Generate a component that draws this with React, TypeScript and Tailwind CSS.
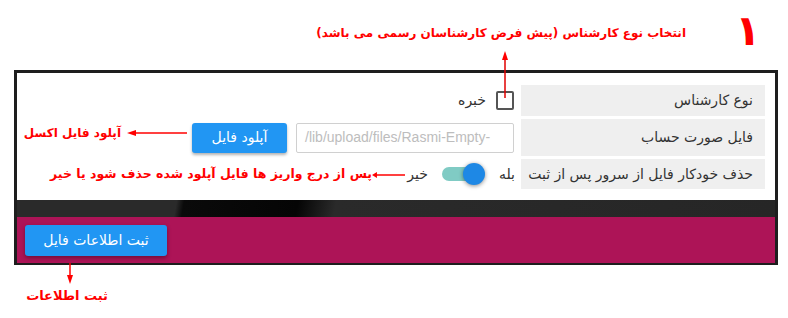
import React from 'react';

const ui = { fontFamily: '"DejaVu Sans", "Noto Sans", sans-serif' };
const note = { fontFamily: '"DejaVu Sans", sans-serif' };

function ArrowLeft({ className }: { className: string }) {
  return (
    <svg className={className} viewBox="0 0 60 8" preserveAspectRatio="none">
      <line x1="6" y1="4" x2="60" y2="4" stroke="#ff0000" strokeWidth="1.5" />
      <polygon points="0,4 9,1 9,7" fill="#ff0000" />
    </svg>
  );
}

function Label({ children, h }: { children: React.ReactNode; h: string }) {
  return (
    <div className={`w-[244px] shrink-0 bg-[#efefef] flex items-center pr-3 text-[14px] text-[#333] ${h}`}>
      {children}
    </div>
  );
}

export default function App() {
  return (
    <div className="relative w-[788px] h-[318px] bg-white overflow-hidden" style={ui}>
      <div className="pt-[70px] pl-[14px]">
        <div className="w-[764px] bg-[#222] border-t-[3px] border-x-[3px] border-b-[2px] border-[#1e1e1e]">
          <div className="h-[127px] bg-white pt-[12px] pr-[10px] flex flex-col gap-[3px] items-start" dir="rtl">
            <div className="flex items-center">
              <Label h="h-[31px]">نوع کارشناس</Label>
              <div className="mr-[7px] w-[18px] h-[19px] border-2 border-[#555] rounded-[2px]" />
              <span className="mr-[10px] text-[14px] text-[#333]">خبره</span>
            </div>
            <div className="flex items-center">
              <Label h="h-[37px]">فایل صورت حساب</Label>
              <div
                className="mr-[7px] w-[218px] h-[30px] border border-[#d0d0d0] border-b-dotted rounded-[2px] flex items-center px-2 text-[14px] text-[#bdbdbd] overflow-hidden whitespace-nowrap"
                dir="ltr"
                style={{ fontFamily: '"Liberation Sans", Arial, sans-serif' }}
              >
                /lib/upload/files/Rasmi-Empty-
              </div>
              <button className="mr-[9px] w-[95px] h-[30px] bg-[#2196f3] text-white text-[14px] rounded-[3px] shadow-[0_2px_3px_rgba(0,0,0,0.3)]">
                آپلود فایل
              </button>
            </div>
            <div className="flex items-center">
              <Label h="h-[30px]">حذف خودکار فایل از سرور پس از ثبت</Label>
              <span className="mr-[6px] text-[14px] text-[#333]">بله</span>
              <div className="relative mr-[15px] w-[42px] h-[14px] rounded-full bg-[#80cbc4]" dir="ltr">
                <div className="absolute left-[21px] top-[-4px] w-[22px] h-[22px] rounded-full bg-[#1e88e5] shadow-[0_1px_4px_rgba(0,0,0,0.45)]" />
              </div>
              <span className="mr-[14px] text-[14px] text-[#333]">خیر</span>
            </div>
          </div>
          <div className="h-[17px] bg-[linear-gradient(100deg,#2a2a2a_0%,#2a2a2a_21%,#0a0a0a_22%,#050505_37%,#2a2a2a_42%,#262626_100%)]" />
          <div className="h-[46px] bg-[#ad1457] flex items-center pl-[8px]">
            <button className="w-[142px] h-[31px] bg-[#2196f3] text-white text-[14px] rounded-[3px] shadow-[0_2px_4px_rgba(0,0,0,0.35)]">
              ثبت اطلاعات فایل
            </button>
          </div>
        </div>
      </div>

      {/* annotations */}
      <div className="absolute left-[735px] top-[10px] text-[42px] leading-none font-bold text-[#ff0000]" style={note}>
        ۱
      </div>
      <div className="absolute right-[102px] top-[24px] text-[12px] font-bold text-[#ff0000] whitespace-nowrap" style={note} dir="rtl">
        انتخاب نوع کارشناس (پیش فرض کارشناسان رسمی می باشد)
      </div>
      <svg className="absolute left-[501px] top-[51px] w-[8px] h-[47px]" viewBox="0 0 8 47">
        <line x1="4" y1="6" x2="4" y2="47" stroke="#e00000" strokeWidth="1.5" />
        <polygon points="4,0 1,9 7,9" fill="#ff0000" />
      </svg>

      <ArrowLeft className="absolute left-[127px] top-[129px] w-[60px] h-[8px]" />
      <div className="absolute right-[667px] top-[124px] text-[12px] font-bold text-[#ff0000] whitespace-nowrap" style={note} dir="rtl">
        آپلود فایل اکسل
      </div>

      <ArrowLeft className="absolute left-[372px] top-[171px] w-[33px] h-[8px]" />
      <div className="absolute right-[416px] top-[165px] text-[12.5px] font-bold text-[#ff0000] whitespace-nowrap" style={note} dir="rtl">
        پس از درج واریز ها فایل آپلود شده حذف شود یا خیر
      </div>

      <svg className="absolute left-[66px] top-[263px] w-[8px] h-[21px]" viewBox="0 0 8 21">
        <line x1="4" y1="0" x2="4" y2="15" stroke="#ff0000" strokeWidth="1.5" />
        <polygon points="4,21 1,12 7,12" fill="#ff0000" />
      </svg>
      <div className="absolute right-[680px] top-[286px] text-[13px] font-bold text-[#ff0000] whitespace-nowrap" style={note} dir="rtl">
        ثبت اطلاعات
      </div>
    </div>
  );
}
